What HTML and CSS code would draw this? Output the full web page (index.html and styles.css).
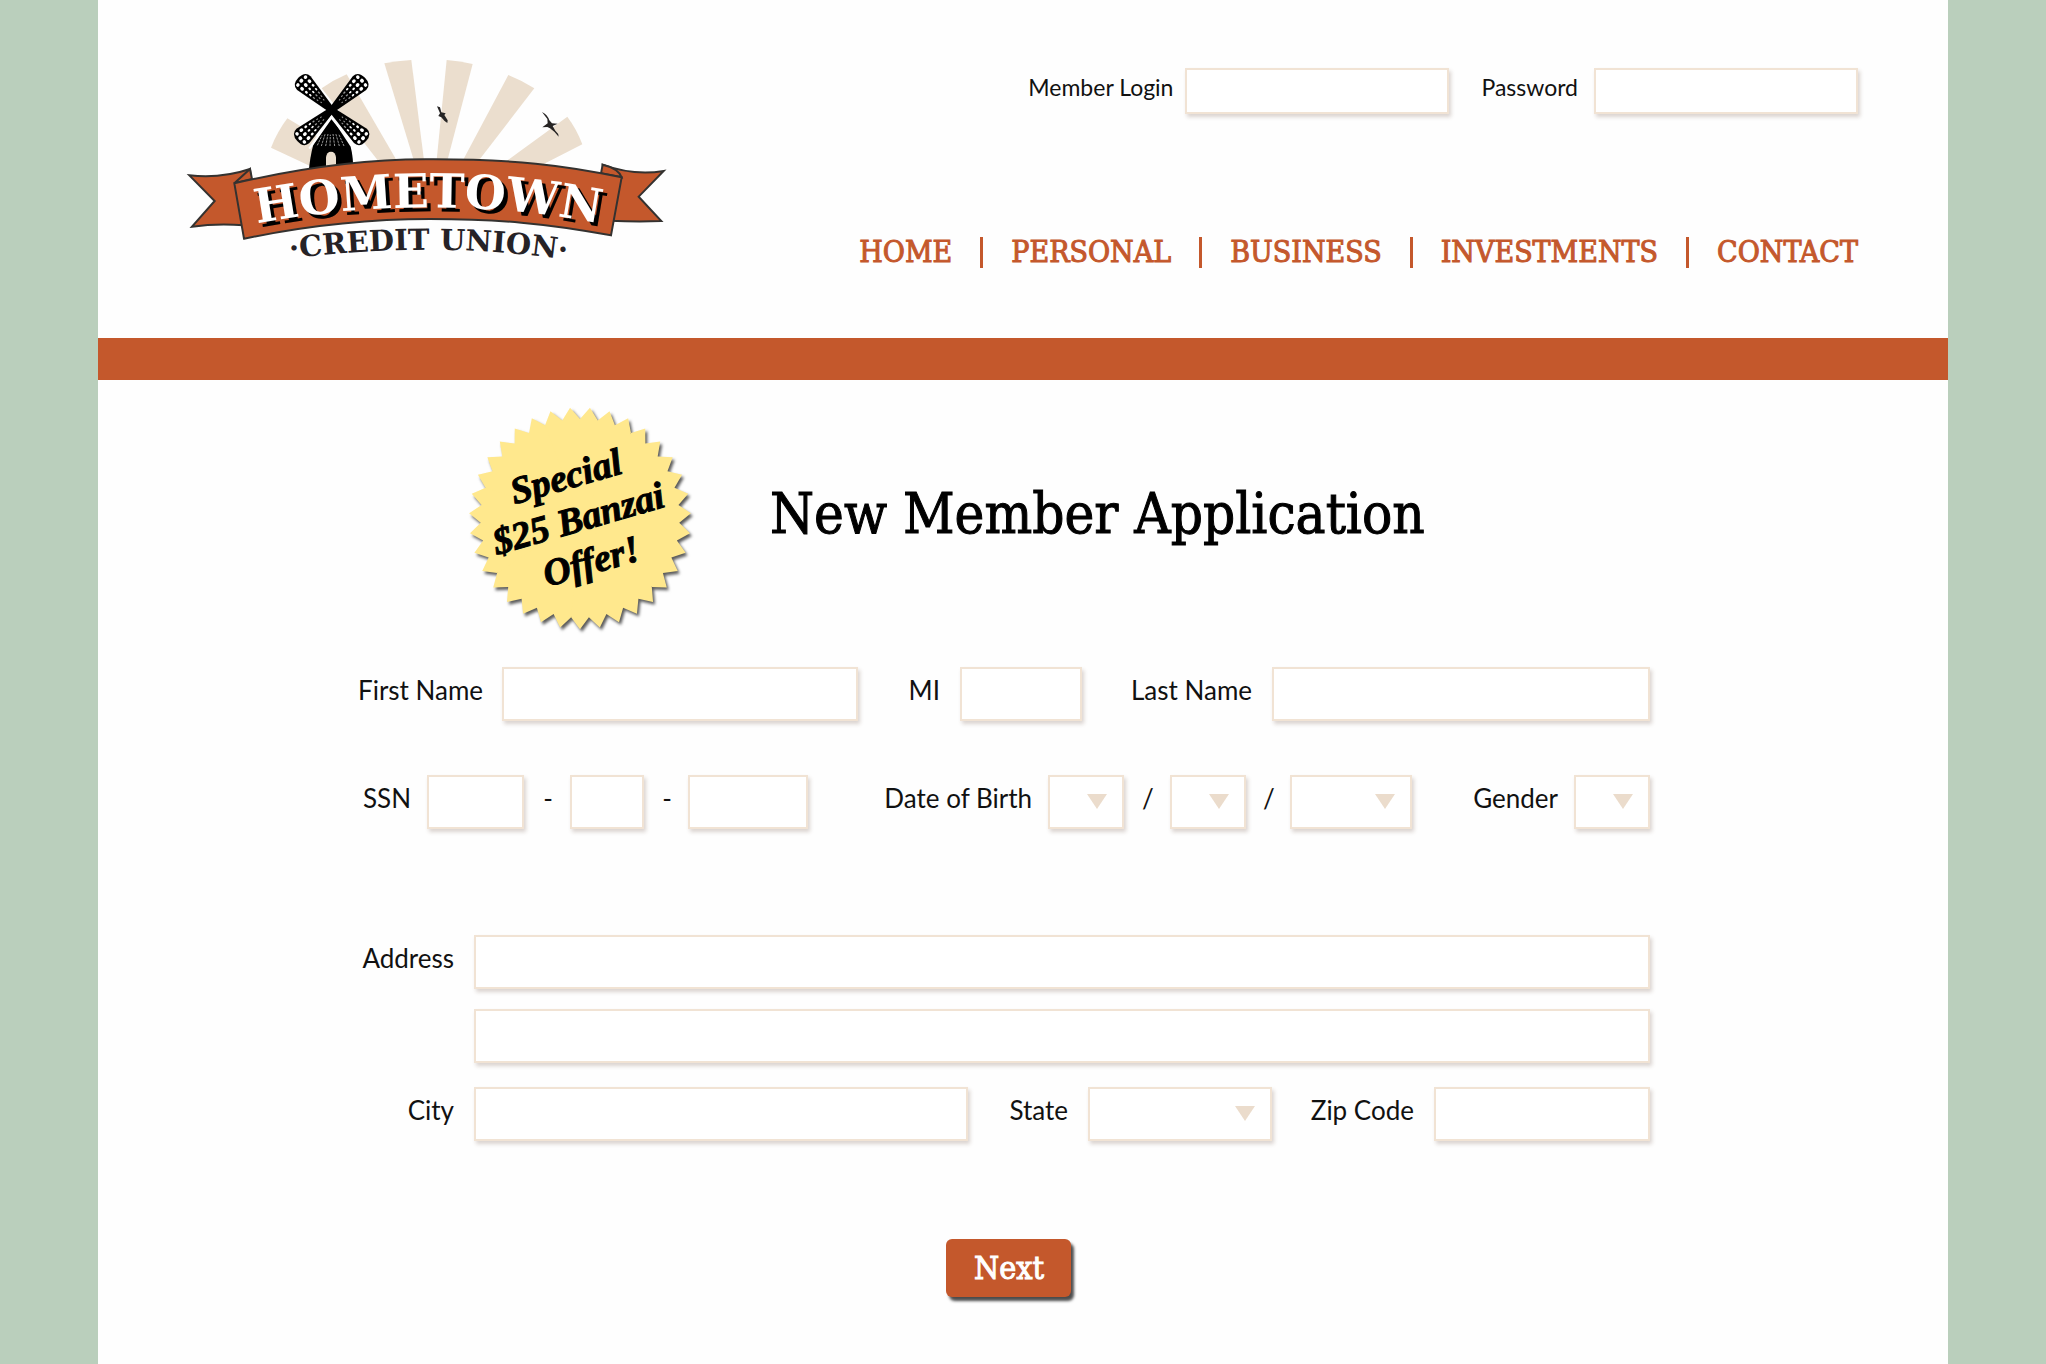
FILE: index.html
```html
<!DOCTYPE html>
<html lang="en">
<head>
<meta charset="utf-8">
<title>Hometown Credit Union – New Member Application</title>
<link rel="stylesheet" href="styles.css">
</head>
<body>
<div class="sheet">
  <header class="header">
    <a class="logo" href="#" aria-label="Hometown Credit Union">
      <svg viewBox="0 0 1470 660" width="490" height="220">
        <defs>
          <path id="arc-name" d="M180 530C400 488 560 473 745 472C930 472 1100 488 1310 530"/>
          <path id="arc-sub" d="M270 634C450 607 600 600 745 599C890 600 1040 608 1220 640"/>
          <g id="blade">
            <path d="M0-9L116-29Q139-29 139 0Q139 29 116 29L0 9Z" fill="#000"/>
            <g fill="#fff">
              <rect x="120" y="-22" width="10" height="11" rx="5"/><rect x="121" y="-6" width="11" height="12" rx="5"/><rect x="120" y="11" width="10" height="11" rx="5"/>
              <rect x="102" y="-21" width="12" height="10" rx="5"/><rect x="102" y="-5" width="12" height="10" rx="5"/><rect x="102" y="11" width="12" height="10" rx="5"/>
              <rect x="87" y="-18" width="9" height="7" rx="3"/><rect x="87" y="-3" width="9" height="6" rx="3"/><rect x="87" y="11" width="9" height="7" rx="3"/>
              <rect x="73" y="-15" width="8" height="5" rx="2"/><rect x="73" y="-2" width="8" height="5" rx="2"/><rect x="73" y="10" width="8" height="5" rx="2"/>
            </g>
            <g fill="#999">
              <rect x="60" y="-13" width="7" height="4"/><rect x="60" y="-2" width="7" height="4"/><rect x="60" y="9" width="7" height="4"/>
              <rect x="48" y="-10" width="6" height="3"/><rect x="48" y="-1" width="6" height="3"/><rect x="48" y="7" width="6" height="3"/>
              <rect x="36" y="-7" width="5" height="3"/><rect x="36" y="4" width="5" height="3"/>
            </g>
          </g>
        </defs>
        <g fill="#ebdece">
          <path d="M322 205Q292 245 273 293L395 350L480 300Z"/>
          <path d="M425 115Q460 90 500 73L655 340H600Z"/>
          <path d="M613 40Q653 32 694 30L733 340H704Z"/>
          <path d="M800 30Q840 33 878 42L800 340H769Z"/>
          <path d="M985 75Q1027 92 1063 115L890 340H844Z"/>
          <path d="M1162 200Q1191 239 1207 283L1075 350L970 340Z"/>
        </g>
        <use href="#blade" transform="translate(455 180) rotate(-136)"/>
        <use href="#blade" transform="translate(455 180) rotate(-44)"/>
        <use href="#blade" transform="translate(455 180) rotate(42)"/>
        <use href="#blade" transform="translate(455 180) rotate(138)"/>
        <path d="M454 202L400 284Q390 320 386 366H520Q520 320 512 290Z" fill="#000"/>
        <path d="M388 296L454 202L528 294" fill="none" stroke="#fff" stroke-width="7"/>
        <path d="M412 286L426 256M424 288L436 250M437 288L444 252M450 288L451 254M464 288L459 252M478 288L467 250M492 288L476 252" stroke="#999" stroke-width="3" stroke-dasharray="7 3"/>
        <path d="M438 350V322Q440 305 453 305Q466 305 468 322V350Z" fill="#ebdece"/>
        <g fill="#262424">
          <path d="M771 169L780 172L784 187L797 190L793 195L803 211L802 219L793 212L784 202L775 198L780 190Z"/>
          <path d="M1086 186Q1102 193 1108 211L1116 220L1133 221L1118 228L1126 242Q1136 250 1136 260Q1122 243 1110 235L1102 231L1087 232L1103 220L1102 207Z"/>
        </g>
        <g fill="#c4582c" stroke="#343230" stroke-width="6" stroke-linejoin="miter">
          <path d="M28 376Q125 386 210 357L225 500L192 526Q110 520 36 530L104 453Z"/>
          <path d="M163 400L210 357L216 387Z"/>
          <path d="M1268 344Q1360 378 1451 363L1376 440L1444 513Q1370 516 1290 512Z"/>
          <path d="M1325 382Q1315 355 1268 344L1263 370Z"/>
          <path d="M163 400C400 345 600 326 760 328C1000 328 1150 345 1325 382L1293 556C1100 520 950 507 750 507C560 507 380 527 192 566Z"/>
        </g>
        <text class="logo-name"><textPath href="#arc-name" startOffset="50%">HOMETOWN</textPath></text>
        <text class="logo-sub"><textPath href="#arc-sub" startOffset="50%">·CREDIT UNION·</textPath></text>
      </svg>
    </a>
    <div class="header-side">
      <form class="login">
        <label for="login">Member Login</label>
        <input id="login" type="text">
        <label for="password">Password</label>
        <input id="password" type="password">
      </form>
      <nav class="nav">
        <a href="#">HOME</a><span class="bar"></span>
        <a href="#">PERSONAL</a><span class="bar"></span>
        <a href="#">BUSINESS</a><span class="bar"></span>
        <a href="#">INVESTMENTS</a><span class="bar"></span>
        <a href="#">CONTACT</a>
      </nav>
    </div>
  </header>
  <div class="band"></div>
  <main class="main">
    <div class="title">
      <svg class="badge" viewBox="0 0 780 780" width="260" height="260">
        <defs>
          <path id="teeth" d="M0 0L-26.7 296.8L0 333L26.7 296.8L59.5 327.6L79.3 287.3L117 311.8L129.3 268.5L170.8 285.9L175.2 241.1L219.1 250.8L215.4 205.9Z"/>
        </defs>
        <g class="seal" transform="translate(390 385)">
          <circle r="296"/>
          <use href="#teeth"/>
          <use href="#teeth" transform="rotate(51.4286)"/>
          <use href="#teeth" transform="rotate(102.8571)"/>
          <use href="#teeth" transform="rotate(154.2857)"/>
          <use href="#teeth" transform="rotate(205.7143)"/>
          <use href="#teeth" transform="rotate(257.1429)"/>
          <use href="#teeth" transform="rotate(308.5714)"/>
        </g>
        <g class="seal-text">
          <text transform="translate(358 296) rotate(-16)">Special</text>
          <text transform="translate(396 422) rotate(-16)">$25 Banzai</text>
          <text transform="translate(434 550) rotate(-16)">Offer!</text>
        </g>
      </svg>
      <h1>New Member Application</h1>
    </div>
    <form class="form">
      <div class="row row-name">
        <label for="first">First Name</label><input id="first" type="text">
        <label for="mi">MI</label><input id="mi" type="text">
        <label for="last">Last Name</label><input id="last" type="text">
      </div>
      <div class="row row-ids">
        <label for="ssn1">SSN</label><input id="ssn1" type="text">
        <span class="sep">-</span><input type="text" aria-label="SSN, middle digits">
        <span class="sep">-</span><input type="text" aria-label="SSN, last digits">
        <label for="dob">Date of Birth</label><select id="dob"></select>
        <span class="sep">/</span><select aria-label="Day of birth"></select>
        <span class="sep">/</span><select aria-label="Year of birth"></select>
        <label for="gender">Gender</label><select id="gender"></select>
      </div>
      <div class="row row-address">
        <label for="addr1">Address</label><input id="addr1" type="text">
      </div>
      <div class="row row-address2">
        <span></span><input type="text" aria-label="Address, second line">
      </div>
      <div class="row row-city">
        <label for="city">City</label><input id="city" type="text">
        <label for="state">State</label><select id="state"></select>
        <label for="zip">Zip Code</label><input id="zip" type="text">
      </div>
      <div class="actions">
        <button class="next" type="submit">Next</button>
      </div>
    </form>
  </main>
</div>
</body>
</html>
```
FILE: styles.css
```css
* { box-sizing: border-box; }

body {
  margin: 0;
  padding: 0 98px;
  background: #bacfbc;
  color: #111;
  font-family: Lato, sans-serif;
}

.sheet {
  min-height: 100vh;
  background: #fefefe;
}

/* Header */
.header {
  display: flex;
  justify-content: space-between;
  padding: 50px 90px 68px 82px;
}

.logo, .logo svg { display: block; }

.logo-name {
  font: bold 141px "DejaVu Serif", serif;
  fill: #fff;
  text-anchor: middle;
  filter: drop-shadow(12px 12px 0 #000);
}
.logo-sub {
  font: bold 87px "DejaVu Serif", serif;
  fill: #262226;
  text-anchor: middle;
}

.header-side {
  display: flex;
  flex-direction: column;
  justify-content: space-between;
  align-items: flex-end;
  padding: 18px 0 0;
}

.login {
  display: flex;
  align-items: center;
  font-size: 23px;
}
.login label { padding: 0 12px 8px 0; }
.login input { width: 264px; height: 46px; }
.login input + label { margin-left: 32px; padding-right: 16px; }

.nav {
  display: flex;
  align-items: center;
  gap: 28px;
  line-height: 36px;
}
.nav a {
  color: #c4582c;
  font-family: "DejaVu Serif Condensed", "DejaVu Serif", serif;
  font-size: 30px;
  text-decoration: none;
  -webkit-text-stroke: 1px #c4582c;
}
.bar {
  width: 3px;
  height: 31px;
  background: #c4582c;
}

.band {
  height: 42px;
  background: #c4582c;
}

/* Title */
.main { padding: 10px 298px 60px 260px; }

.title {
  display: flex;
  align-items: center;
  gap: 60px;
  padding-left: 92px;
}
.seal {
  fill: #ffe88d;
  filter: drop-shadow(6px 8px 5px rgba(0, 0, 0, .65));
}
.seal-text {
  font: italic bold 114px "Liberation Serif", serif;
  stroke: #000;
  stroke-width: 3px;
  text-anchor: middle;
}
h1 {
  margin: 0;
  padding-bottom: 12px;
  font: 56px/64px "DejaVu Serif Condensed", "DejaVu Serif", serif;
  color: #000;
  white-space: nowrap;
  -webkit-text-stroke: 1px #000;
}

/* Fields */
input, select {
  display: block;
  width: 100%;
  min-width: 0;
  height: 54px;
  margin: 0;
  padding: 0 12px;
  border: 2px solid #f1e3d4;
  border-radius: 0;
  background: #fff;
  box-shadow: 2px 3px 4px rgba(90, 60, 40, .22);
  font: inherit;
}
select {
  appearance: none;
  background: #fff url("data:image/svg+xml,%3Csvg xmlns='http://www.w3.org/2000/svg' width='20' height='15'%3E%3Cpath d='M0 0H20L10 15Z' fill='%23ebdccc'/%3E%3C/svg%3E") no-repeat right 15px top 17px;
}

.form { font-size: 26px; }
.row {
  display: grid;
  align-items: center;
}
.row label {
  padding: 0 20px 8px 0;
  text-align: right;
  line-height: 34px;
  white-space: nowrap;
}
.sep {
  padding: 0 0 8px 2px;
  line-height: 34px;
  text-align: center;
}
.row-name {
  margin-top: 17px;
  grid-template-columns: 144px 356fr 102px 122fr 190px 378fr;
}
.row-ids {
  margin-top: 54px;
  grid-template-columns: 69px 97fr 46px 74fr 44px 120fr 240px 76fr 46px 76fr 44px 122fr 162px 76fr;
}
.row-ids label { padding-right: 16px; }
.row-address {
  margin-top: 106px;
  grid-template-columns: 116px 1fr;
}
.row-address2 {
  margin-top: 20px;
  grid-template-columns: 116px 1fr;
}
.row-city {
  margin-top: 24px;
  grid-template-columns: 116px 494fr 120px 184fr 162px 216fr;
}

.actions {
  display: flex;
  justify-content: center;
  padding: 98px 0 0 8px;
}
.next {
  width: 125px;
  height: 58px;
  padding: 0 0 0 2px;
  border: 0;
  border-radius: 6px;
  background: #c4582c;
  box-shadow: 3px 4px 3px rgba(0, 0, 0, .7);
  color: #fff;
  font: 32px "DejaVu Serif Condensed", "DejaVu Serif", serif;
  -webkit-text-stroke: 1px #fff;
}
```
